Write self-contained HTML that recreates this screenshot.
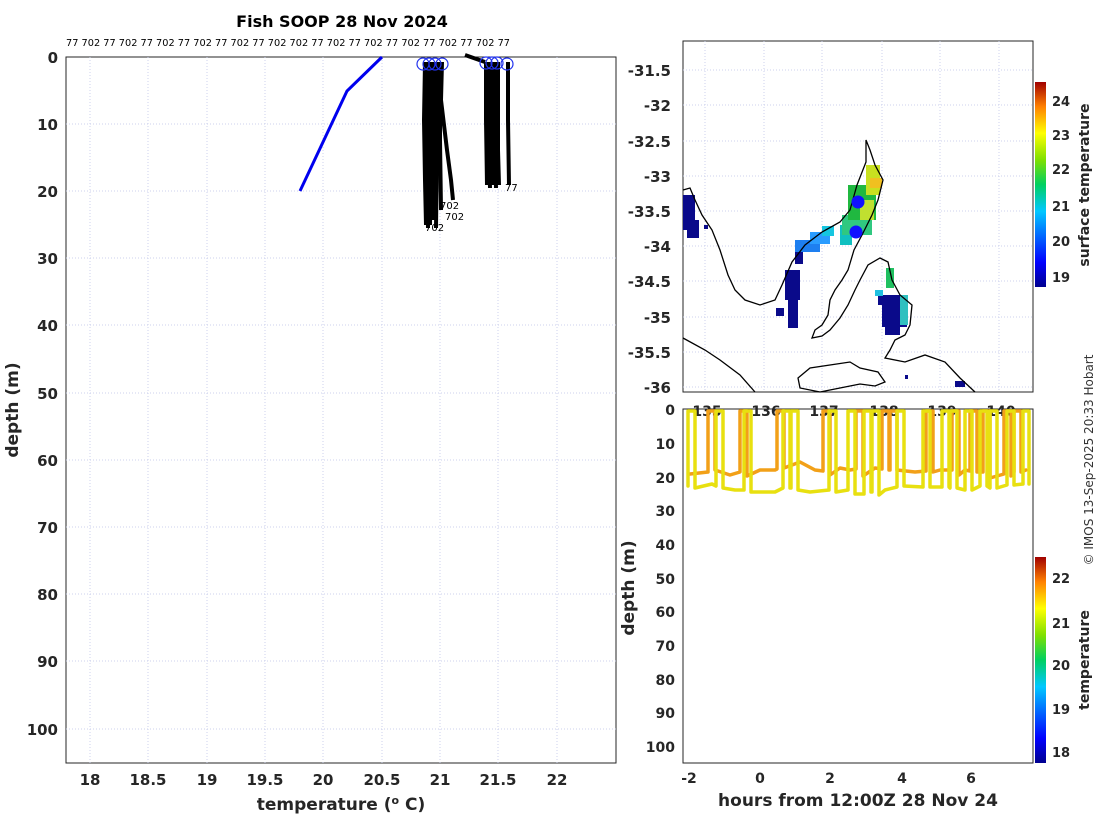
<!DOCTYPE html>
<html><head><meta charset="utf-8"><style>
body{margin:0;background:#fff;width:1100px;height:820px;overflow:hidden}
svg{display:block;font-family:"DejaVu Sans","Liberation Sans",sans-serif}
.t{font-size:15px;font-weight:bold;fill:#262626}
.s{font-size:10px;fill:#000}
</style></head><body>
<svg width="1100" height="820" viewBox="0 0 1100 820" xmlns="http://www.w3.org/2000/svg">
<defs>
<linearGradient id="jet" x1="0" y1="1" x2="0" y2="0">
<stop offset="0" stop-color="#00008f"/><stop offset="0.12" stop-color="#0000ff"/><stop offset="0.37" stop-color="#00c8ff"/><stop offset="0.5" stop-color="#00d060"/><stop offset="0.62" stop-color="#7fe000"/><stop offset="0.75" stop-color="#ffff00"/><stop offset="0.88" stop-color="#ff8000"/><stop offset="1" stop-color="#a00000"/>
</linearGradient>
</defs>
<!-- LEFT PLOT -->
<text x="342" y="27" text-anchor="middle" style="font-size:16px;font-weight:bold;fill:#000">Fish SOOP 28 Nov 2024</text>
<text x="66" y="46" class="s" textLength="444" lengthAdjust="spacingAndGlyphs">77 702 77 702 77 702 77 702 77 702 77 702 702 77 702 77 702 77 702 77 702 77 702 77</text>
<rect x="66" y="57" width="550" height="706" fill="#fff" stroke="#262626"/>
<g stroke="#ccd2ec" stroke-dasharray="1,2" stroke-width="1">
<path d="M90 57V763M148 57V763M207 57V763M265 57V763M323 57V763M382 57V763M440 57V763M498 57V763M557 57V763"/>
<path d="M66 124H616M66 191H616M66 258H616M66 325H616M66 393H616M66 460H616M66 527H616M66 594H616M66 661H616M66 729H616"/>
</g>
<path d="M300 191L347 91L382 57" stroke="#0000ee" stroke-width="3" fill="none"/>
<g stroke="#000" stroke-width="4" fill="none" stroke-linejoin="round">
<path d="M425 62L424 120L425 180L426 225"/><path d="M428 62L427 140L428 228"/><path d="M431 62L431 150L430 225"/><path d="M434 62L434 130L433 220"/>
<path d="M437 62L437 150L436 228"/><path d="M440 62L440 140L441 210"/><path d="M442 62L441 100L447 150L451 180L453 200"/><path d="M428 65L430 215"/>
<path d="M486 62L486 120L487 185"/><path d="M489 62L489 150L490 188"/><path d="M492 62L492 130L493 185"/><path d="M495 62L495 140L496 188"/><path d="M498 62L498 150L499 185"/><path d="M508 62L508 120L509 185"/>
<path d="M465 55L485 62"/>
</g>
<g fill="none" stroke="#2233ee" stroke-width="1.2">
<circle cx="423" cy="64" r="6"/><circle cx="429" cy="64" r="6"/><circle cx="435" cy="64" r="6"/><circle cx="442" cy="64" r="6"/>
<circle cx="486" cy="63" r="6"/><circle cx="492" cy="63" r="6"/><circle cx="497" cy="63" r="6"/><circle cx="507" cy="64" r="6"/>
</g>
<g class="s" style="font-size:10px"><text x="440" y="209">702</text><text x="445" y="220">702</text><text x="425" y="231">702</text><text x="505" y="191">77</text></g>
<g class="t" text-anchor="end"><text x="58" y="63">0</text><text x="58" y="130">10</text><text x="58" y="197">20</text><text x="58" y="264">30</text><text x="58" y="331">40</text><text x="58" y="399">50</text><text x="58" y="466">60</text><text x="58" y="533">70</text><text x="58" y="600">80</text><text x="58" y="667">90</text><text x="58" y="735">100</text></g>
<g class="t" text-anchor="middle"><text x="90" y="785">18</text><text x="148" y="785">18.5</text><text x="207" y="785">19</text><text x="265" y="785">19.5</text><text x="323" y="785">20</text><text x="382" y="785">20.5</text><text x="440" y="785">21</text><text x="498" y="785">21.5</text><text x="557" y="785">22</text></g>
<text x="341" y="810" text-anchor="middle" style="font-size:17px;font-weight:bold;fill:#262626">temperature (<tspan font-size="11" dy="-6">o</tspan><tspan dy="6"> C)</tspan></text>
<text transform="translate(18 410) rotate(-90)" text-anchor="middle" style="font-size:17px;font-weight:bold;fill:#262626">depth (m)</text>

<!-- MAP -->
<rect x="683" y="41" width="350" height="351" fill="#fff" stroke="#262626"/>
<g stroke="#ccd2ec" stroke-dasharray="1,2">
<path d="M705 41V392M764 41V392M822 41V392M882 41V392M940 41V392M999 41V392"/>
<path d="M683 70H1033M683 105H1033M683 141H1033M683 176H1033M683 211H1033M683 246H1033M683 281H1033M683 317H1033M683 352H1033M683 387H1033"/>
</g>
<g fill="#0a0a8a">
<rect x="683" y="195" width="12" height="35"/><rect x="687" y="220" width="12" height="18"/><rect x="704" y="225" width="4" height="4"/>
<rect x="785" y="270" width="15" height="30"/><rect x="788" y="298" width="10" height="30"/><rect x="776" y="308" width="8" height="8"/><rect x="795" y="250" width="8" height="14"/>
<rect x="878" y="295" width="28" height="10"/><rect x="882" y="305" width="25" height="22"/><rect x="885" y="325" width="15" height="10"/>
<rect x="955" y="381" width="10" height="6"/><rect x="905" y="375" width="3" height="4"/>
</g>
<g>
<rect x="795" y="240" width="25" height="12" fill="#1e7ff0"/><rect x="810" y="232" width="20" height="12" fill="#2a9cff"/><rect x="822" y="226" width="12" height="10" fill="#16c6e0"/>
<rect x="840" y="225" width="12" height="20" fill="#10c0c0"/><rect x="842" y="215" width="30" height="20" fill="#30c880"/>
<rect x="848" y="185" width="28" height="35" fill="#20b840"/><rect x="866" y="165" width="14" height="30" fill="#c8e020"/><rect x="870" y="178" width="12" height="10" fill="#f0c020"/><rect x="860" y="200" width="14" height="20" fill="#c0e030"/>
<rect x="886" y="268" width="8" height="20" fill="#20c060"/><rect x="900" y="295" width="8" height="30" fill="#30c0c0"/><rect x="875" y="290" width="8" height="6" fill="#20c0e0"/>
</g>
<g fill="none" stroke="#000" stroke-width="1.3">
<path d="M683 190L690 188L695 200L702 215L712 230L720 250L728 275L735 290L745 300L760 305L775 300L782 285L792 262L805 245L822 232L840 222L850 210L857 185L866 162L866 140L870 150L875 165L883 180L878 200L872 215L862 235L854 250L848 270L842 280L835 290L830 300L828 315L822 325L815 330L812 338L822 336L830 330L840 318L848 305L855 290L860 280L868 265L880 258L888 262L892 280L900 295L912 305L910 325L905 335L895 340L890 350L885 358L905 362L925 355L945 362L960 378L975 392"/>
<path d="M683 338L705 350L720 360L740 375L755 392"/>
<path d="M798 378L810 368L830 365L850 362L860 368L878 372L885 382L875 386L860 384L840 388L820 392L800 388Z"/>
</g>
<g class="t" text-anchor="end"><text x="671" y="76">-31.5</text><text x="671" y="111">-32</text><text x="671" y="147">-32.5</text><text x="671" y="182">-33</text><text x="671" y="217">-33.5</text><text x="671" y="252">-34</text><text x="671" y="287">-34.5</text><text x="671" y="323">-35</text><text x="671" y="358">-35.5</text><text x="671" y="393">-36</text></g>
<circle cx="858" cy="202" r="6.5" fill="#1010ff"/><circle cx="856" cy="232" r="6.5" fill="#1010ff"/>
<rect x="1035" y="82" width="11" height="205" fill="url(#jet)"/>
<g class="t" style="font-size:13px"><text x="1052" y="106">24</text><text x="1052" y="140">23</text><text x="1052" y="174">22</text><text x="1052" y="211">21</text><text x="1052" y="246">20</text><text x="1052" y="282">19</text></g>
<text transform="translate(1089 185) rotate(-90)" text-anchor="middle" style="font-size:14px;font-weight:bold;fill:#262626">surface temperature</text>

<!-- BOTTOM -->
<rect x="683" y="409" width="350" height="354" fill="#fff" stroke="#262626"/>
<g class="t" text-anchor="middle" style="font-size:14px"><text x="707" y="416">135</text><text x="766" y="416">136</text><text x="824" y="416">137</text><text x="884" y="416">138</text><text x="942" y="416">139</text><text x="1001" y="416">140</text></g>
<g fill="none" stroke-width="3.5" stroke-linecap="round" stroke-linejoin="round">
<path stroke="#f2a018" d="M690 474L708 472V411H715V470L730 475L740 472V411H747V476L760 470L775 470L777 469V411H784V468L800 462L815 470L823 471V411H830V475L840 468L850 470L856 469V411H863V476L875 468L882 469V411H889V470L890 470V411H897V470L915 472L926 471V411H933V472L940 470L952 470V411H959V475L965 470L970 471V411H977V472L983 472V411H990V478L1004 474V411H1011V476L1014 472V411H1021V472L1026 470"/>
<path stroke="#e8e010" d="M688 486V411H695V488L712 484L716 486V411H723V488L735 490L744 490V411H751V492L775 492L783 488V411H790V488L791 488V411H798V490L810 492L829 490V411H836V492L848 490V411H855V494L864 494V411H871V492L872 492V411H879V495L885 490L897 487V411H904V486L923 487V411H930V487L942 487V411H949V487L950 488V411H957V488L965 490V411H972V490L980 486V411H987V486L990 488V411H997V488L1007 485V411H1014V485L1023 484V411H1029V484"/>
</g>
<g class="t" text-anchor="end" style="font-size:14px"><text x="675" y="415">0</text><text x="675" y="449">10</text><text x="675" y="483">20</text><text x="675" y="516">30</text><text x="675" y="550">40</text><text x="675" y="584">50</text><text x="675" y="617">60</text><text x="675" y="651">70</text><text x="675" y="685">80</text><text x="675" y="718">90</text><text x="675" y="752">100</text></g>
<g class="t" text-anchor="middle" style="font-size:14px"><text x="689" y="783">-2</text><text x="760" y="783">0</text><text x="830" y="783">2</text><text x="902" y="783">4</text><text x="971" y="783">6</text></g>
<text x="858" y="806" text-anchor="middle" style="font-size:17px;font-weight:bold;fill:#262626">hours from 12:00Z 28 Nov 24</text>
<text transform="translate(634 588) rotate(-90)" text-anchor="middle" style="font-size:17px;font-weight:bold;fill:#262626">depth (m)</text>
<rect x="1035" y="557" width="11" height="206" fill="url(#jet)"/>
<g class="t" style="font-size:13px"><text x="1052" y="583">22</text><text x="1052" y="628">21</text><text x="1052" y="670">20</text><text x="1052" y="714">19</text><text x="1052" y="757">18</text></g>
<text transform="translate(1089 660) rotate(-90)" text-anchor="middle" style="font-size:14px;font-weight:bold;fill:#262626">temperature</text>
<text transform="translate(1093 460) rotate(-90)" text-anchor="middle" style="font-size:12px;fill:#333">© IMOS 13-Sep-2025 20:33 Hobart</text>
</svg>
</body></html>
